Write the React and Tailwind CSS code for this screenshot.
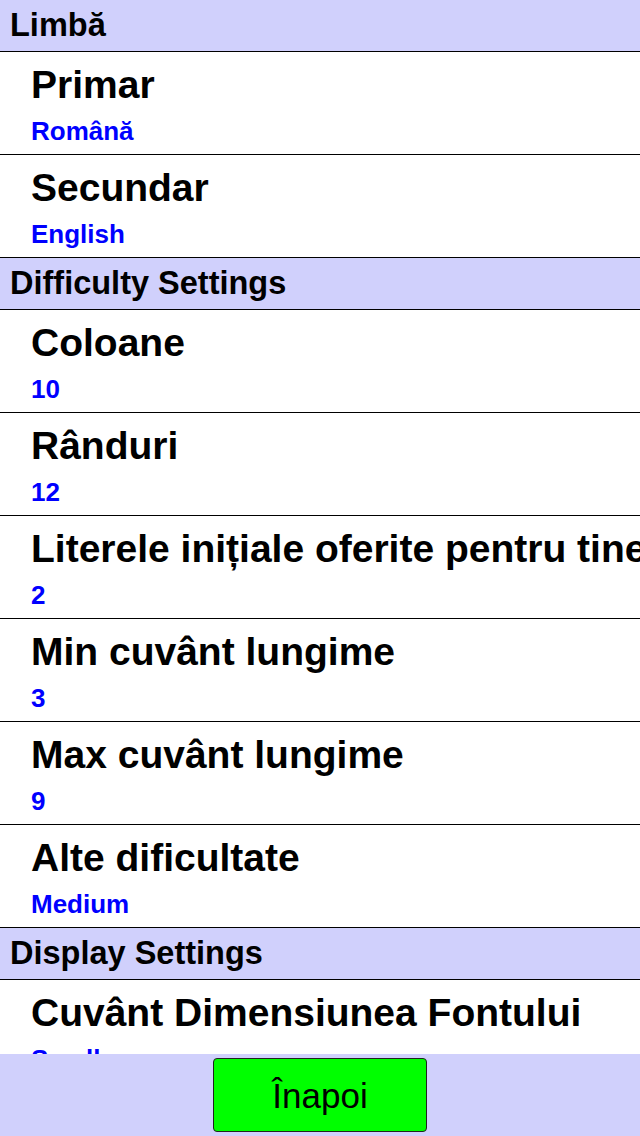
const SECTIONS = [
  {
    title: "Limbă",
    items: [
      { label: "Primar", value: "Română" },
      { label: "Secundar", value: "English" },
    ],
  },
  {
    title: "Difficulty Settings",
    items: [
      { label: "Coloane", value: "10" },
      { label: "Rânduri", value: "12" },
      { label: "Literele inițiale oferite pentru tine", value: "2" },
      { label: "Min cuvânt lungime", value: "3" },
      { label: "Max cuvânt lungime", value: "9" },
      { label: "Alte dificultate", value: "Medium" },
    ],
  },
  {
    title: "Display Settings",
    items: [{ label: "Cuvânt Dimensiunea Fontului", value: "Small" }],
  },
];

function SectionHeader({ title }) {
  return (
    <div className="h-[52px] shrink-0 bg-[#d0d0fc] border-b border-black pl-[10px] pt-[7px]">
      <p className="text-[32.5px] leading-[37px] font-bold text-black whitespace-nowrap">{title}</p>
    </div>
  );
}

function SettingRow({ label, value }) {
  return (
    <div className="h-[103px] shrink-0 bg-white border-b border-black pl-[31px] pt-[10px] flex flex-col gap-[9px] overflow-hidden">
      <p className="text-[39px] leading-[45px] font-bold text-black whitespace-nowrap">{label}</p>
      <p className="text-[26px] leading-[30px] font-bold text-[#0000ff] whitespace-nowrap">{value}</p>
    </div>
  );
}

export default function App() {
  return (
    <div
      className="w-[640px] h-[1136px] flex flex-col bg-white overflow-hidden"
      style={{ fontFamily: '"Liberation Sans", Arial, sans-serif' }}
    >
      {/* Settings list */}
      <div className="flex-1 min-h-0 overflow-hidden flex flex-col">
        {SECTIONS.map((s) => (
          <div key={s.title} className="flex flex-col shrink-0">
            <SectionHeader title={s.title} />
            {s.items.map((it) => (
              <SettingRow key={it.label} label={it.label} value={it.value} />
            ))}
          </div>
        ))}
      </div>

      {/* Footer */}
      <div className="h-[82px] shrink-0 bg-[#d0d0fc] flex justify-center pt-[4px]">
        <button className="w-[214px] h-[74px] bg-[#00ff00] border border-[#222] rounded-[4px] text-[35px] leading-none text-black">
          Înapoi
        </button>
      </div>
    </div>
  );
}
